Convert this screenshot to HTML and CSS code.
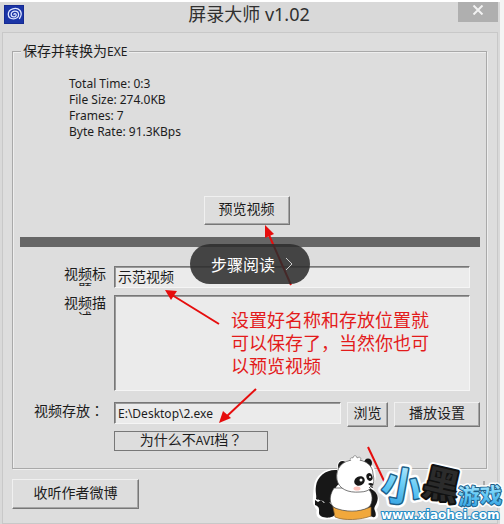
FILE: index.html
```html
<!DOCTYPE html>
<html lang="zh-CN">
<head>
<meta charset="utf-8">
<title>屏录大师 v1.02</title>
<link rel="stylesheet" href="styles.css">
</head>
<body>
<main class="window">
  <header class="titlebar">
    <svg class="app-icon" viewBox="0 0 20 19" aria-hidden="true">
      <rect width="20" height="19" fill="#152a92"/>
      <rect x="1" y="1" width="18" height="17" fill="#1b35a6"/>
      <path d="M10 9.500C10 8 12.200 8.300 12.200 10C12.200 12.500 7.200 12.800 7.200 9.300C7.200 5.200 14.600 5 14.600 9.800C14.600 15.200 4.500 15.200 4.300 9.500C4.100 3.500 12.500 1.600 16 5.500C17.500 7.500 17.300 11 15.500 13.500" fill="none" stroke="#dfe6ff" stroke-width="1.300" stroke-linecap="round"/>
    </svg>
    <h1 class="title">屏录大师 v1.02</h1>
    <button class="close" type="button" aria-label="关闭">
      <svg viewBox="0 0 12 10" aria-hidden="true"><path d="M1.500 .5L10.500 9.500M10.500 .5L1.500 9.500" stroke="#f2f2f2" stroke-width="2" fill="none"/></svg>
    </button>
  </header>

  <form class="client">
    <fieldset class="group">
      <legend class="legend">保存并转换为<span class="latin">EXE</span></legend>
      <ul class="stats">
        <li>Total Time: 0:3</li>
        <li>File Size: 274.0KB</li>
        <li>Frames: 7</li>
        <li>Byte Rate: 91.3KBps</li>
      </ul>
      <div class="preview"><button class="btn btn-preview" type="button">预览视频</button></div>
      <div class="divider"></div>
      <div class="fields">
        <label class="label clipped" for="video-title">视频标题</label>
        <input class="field inset" id="video-title" type="text" value="示范视频">
        <label class="label clipped" for="video-desc">视频描述</label>
        <textarea class="field field-area inset" id="video-desc"></textarea>
        <label class="label label-path" for="video-path">视频存放<span lang="zh-TW">：</span></label>
        <div class="path-row">
          <input class="field field-path inset" id="video-path" type="text" value="E:\Desktop\2.exe">
          <button class="btn btn-small btn-browse" type="button">浏览</button>
          <button class="btn btn-small btn-play" type="button">播放设置</button>
        </div>
        <button class="btn-why" type="button">为什么不<span class="latin">AVI</span>档<span lang="zh-TW">？</span></button>
      </div>
    </fieldset>
    <button class="btn btn-weibo" type="button">收听作者微博</button>
  </form>

  <svg class="marks" viewBox="0 0 504 522" aria-hidden="true">
    <g stroke="#e60d0d" stroke-width="2" fill="#e60d0d">
      <path d="M291 283L269 233"/>
      <path d="M265 223L274 232L265 236Z" stroke="none"/>
      <path d="M219 322L172 293"/>
      <path d="M165 288L177 289L171 298Z" stroke="none"/>
      <path d="M256 387L226 415"/>
      <path d="M219 421L223 409L231 416Z" stroke="none"/>
      <path d="M368 445L385 481"/>
    </g>
  </svg>
  <p class="note">设置好名称和存放位置就<br>可以保存了，当然你也可<br>以预览视频</p>
  <a class="pill" href="#">步骤阅读<svg class="chevron" viewBox="0 0 8 14" aria-hidden="true"><path d="M1 1L7 7L1 13" fill="none" stroke="#ccc" stroke-width="1"/></svg></a>

  <svg class="logo" viewBox="0 0 204 84" role="img" aria-label="小黑游戏 www.xiaohei.com">
    <defs>
      <linearGradient id="blue" x1="0" y1="0" x2="0" y2="1">
        <stop offset="0" stop-color="#d5f3ff"/><stop offset=".5" stop-color="#6acdf6"/><stop offset="1" stop-color="#2a9ade"/>
      </linearGradient>
    </defs>
    <path d="M184 41V66" stroke="#777" stroke-width="1"/>
    <g stroke="#fff" stroke-width="2.500" fill="#fff" stroke-linejoin="round">
      <path d="M38 31C27 28 16 36 15 47L14 60C13 65 17 67 18 70C16 77 21 79 27 78L70 78C77 79 79 76 75 69C79 65 79 58 75 55L70 45C77 42 75 28 70 25C71 20 66 19 62 22C58 19 50 19 46 23C42 20 37 22 39 28Z"/>
    </g>
    <path d="M37 30C27 29 17 36 16 46C15 52 17 56 16 59C19 61 22 59 25 63L34 62C32 51 36 45 41 43Z" fill="#171717"/>
    <path d="M15 60L18 62L21 60L24 63L28 61C32 65 36 69 35 74C34 79 19 79 19 73C19 69 20 67 15 65Z" fill="#171717"/>
    <path d="M69 48C77 51 79 57 77 62C76 66 73 67 75 71C77 76 75 79 70 76L66 62Z" fill="#171717"/>
    <path d="M33 67C41 71 58 72 71 67L71 76C61 80 44 81 35 77Z" fill="#f1a83c" stroke="#8a602a" stroke-width=".7"/>
    <path d="M34 48C28 57 29 67 38 69C50 73 65 71 70 66C74 59 72 50 66 48Z" fill="#fff" stroke="#444" stroke-width=".7"/>
    <ellipse cx="42.500" cy="26" rx="4.500" ry="5" fill="#171717"/>
    <ellipse cx="68" cy="23" rx="4" ry="4.500" fill="#171717"/>
    <path d="M37 40C35 28 43 20 54 20C66 19 73 26 73 34C76 45 71 52 60 52C48 53 39 49 37 40Z" fill="#fff" stroke="#555" stroke-width=".8"/>
    <path d="M51 21C49 19 51 17 53 18C53 15 57 15 57 18C60 16 62 18 60 21" fill="#fff" stroke="#777" stroke-width=".7"/>
    <ellipse cx="59.500" cy="41" rx="5.500" ry="4.500" transform="rotate(-28 59.500 41)" fill="#171717"/>
    <ellipse cx="69.500" cy="37" rx="3" ry="4" transform="rotate(-18 69.500 37)" fill="#171717"/>
    <circle cx="61" cy="40" r="1.500" fill="#fff"/><circle cx="70" cy="37" r="1" fill="#fff"/>
    <ellipse cx="57" cy="48.500" rx="3.500" ry="2" fill="#ffc4bd"/>
    <path d="M68 44C70 42 74 43 73 45L71 46Z" fill="#171717"/><path d="M71 46L69 48M71 46L73 48" stroke="#333" stroke-width=".8"/>

    <g class="logo-big">
      <text class="halo" x="82" y="61" transform="rotate(10 101 46)">小</text>
      <text class="blue-text" x="82" y="61" transform="rotate(10 101 46)">小</text>
    </g>
    <g class="logo-mid">
      <text class="halo" x="124" y="58" transform="rotate(13 142 44)">黑</text>
      <text class="black-text" x="124" y="58" transform="rotate(13 142 44)">黑</text>
    </g>
    <g class="logo-small">
      <text class="halo" x="158" y="64" transform="rotate(-2 180 56)">游戏</text>
      <text class="blue-text" x="158" y="64" transform="rotate(-2 180 56)">游戏</text>
    </g>
    <text class="logo-url" x="81" y="79">www.xiaohei.com</text>
  </svg>
</main>
</body>
</html>
```
FILE: styles.css
```css
* { box-sizing: border-box; }

body {
  margin: 0;
  background: #f4f4f4;
  font-family: "Noto Sans", "Noto Sans CJK SC", sans-serif;
  font-size: 14px;
  color: #1c1c1c;
}

button, input, textarea { font: inherit; color: inherit; border-radius: 0; }
button { padding: 0; cursor: pointer; }

.window {
  position: relative;
  margin-right: 4px;
  padding: 0 2px 1px;
  background: #d9d9d9;
  border-top: 2px solid #fff;
}

.titlebar {
  display: grid;
  grid-template-columns: 38px 1fr 40px;
  align-items: start;
  height: 30px;
}
.app-icon { width: 20px; height: 19px; margin: 3px 0 0 2px; }
.title {
  margin: 0;
  font-size: 18px;
  font-weight: 400;
  line-height: 25px;
  text-align: center;
  color: #303030;
}
.close {
  display: flex;
  align-items: center;
  justify-content: center;
  height: 20px;
  border: 0;
  background: #afafaf;
}
.close svg { width: 12px; height: 10px; margin-bottom: 5px; }

.client {
  padding: 9px 10px 14px 9px;
  border: 1px solid #c8c8c8;
  background: #ddd;
}

.group {
  min-width: 0;
  margin: 0;
  padding: 15px 6px 17px 7px;
  border: 1px solid #a9a9a9;
  box-shadow: 1px 1px #eee, inset 1px 1px #eee;
}
.legend {
  margin-left: 1px;
  padding: 0 2px;
  background: #ddd;
  line-height: 18px;
}
.latin { font-size: 12px; }

.stats {
  margin: 0;
  padding: 0 0 0 49px;
  list-style: none;
  font-size: 12px;
  line-height: 16px;
}

.btn {
  height: 29px;
  padding-bottom: 3px;
  border: 1px solid;
  border-color: #f0f0f0 #777 #777 #f0f0f0;
  background: #ddd;
  box-shadow: inset -1px -1px #a5a5a5;
  line-height: 20px;
}
.preview { display: flex; justify-content: center; margin: 56px 7px 12px 0; }
.btn-preview { width: 86px; }
.divider { height: 10px; background: #666; }

.fields {
  display: grid;
  grid-template-columns: 87px 1fr;
  column-gap: 7px;
  margin-top: 19px;
}
.label { justify-self: end; line-height: 17px; }
.clipped {
  width: 44px;
  height: 20px;
  overflow: hidden;
  line-height: 15px;
  text-align: center;
  word-break: break-all;
}
.label-path {
  padding-right: 3px;
  line-height: 18px;
}

.field {
  display: block;
  height: 22px;
  margin: 0 10px 7px 0;
  padding: 0 3px 3px;
  background: #ebebeb;
  line-height: 18px;
}
.inset {
  border: 1px solid;
  border-color: #777 #f5f5f5 #f5f5f5 #777;
  box-shadow: inset 1px 1px #999;
}
.field-area { height: 96px; margin-bottom: 11px; resize: none; }
.path-row { display: flex; gap: 6px; height: 29px; }
.field-path { flex: 1; min-width: 0; margin: 0; font-size: 12px; padding-bottom: 0; }
.btn-small { height: 25px; }
.btn-browse { width: 41px; }
.btn-play { width: 86px; }
.btn-why {
  grid-column: 2;
  width: 154px;
  height: 20px;
  padding-bottom: 3px;
  border: 1px solid #777;
  background: #ddd;
  line-height: 15px;
}
.btn-weibo { display: block; width: 127px; height: 30px; margin-top: 10px; }

.marks { position: absolute; top: 0; left: 0; width: 504px; height: 522px; pointer-events: none; }
.note {
  position: absolute;
  top: 307px;
  left: 231px;
  margin: 0;
  font-size: 18px;
  line-height: 23px;
  white-space: nowrap;
  color: #e31b1b;
}
.pill {
  position: absolute;
  top: 242px;
  left: 190px;
  display: flex;
  align-items: center;
  justify-content: center;
  gap: 10px;
  width: 120px;
  height: 40px;
  padding-left: 4px;
  border-radius: 20px;
  background: rgba(45, 45, 45, .87);
  color: #fff;
  font-size: 16px;
  text-decoration: none;
}
.chevron { width: 8px; height: 14px; }

.logo { position: absolute; top: 438px; left: 300px; width: 204px; height: 84px; }
.logo text { font-family: "Noto Sans CJK SC", sans-serif; font-weight: 700; stroke-linejoin: round; paint-order: stroke; }
.logo-big { font-size: 40px; }
.logo-mid { font-size: 36px; }
.logo-small { font-size: 22px; }
.logo .halo { fill: #fff; stroke: #fff; stroke-width: 8px; }
.logo .blue-text { fill: url(#blue); stroke: #1d5f88; stroke-width: 3px; }
.logo .black-text { fill: #2b2b2b; stroke: #111; stroke-width: 4px; }
.logo-small .halo { stroke-width: 5px; }
.logo-small .blue-text { stroke-width: 2px; }
.logo .logo-url {
  font-family: "DejaVu Sans", sans-serif;
  font-size: 12px;
  font-weight: 700;
  fill: #fff;
  stroke: #238bc4;
  stroke-width: 2px;
}
```
